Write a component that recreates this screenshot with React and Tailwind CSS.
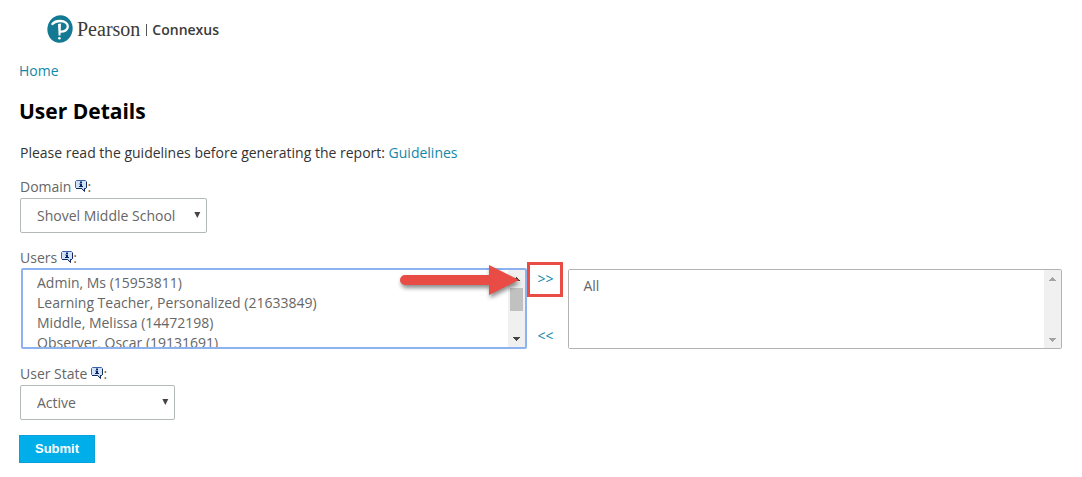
import React from "react";

function PearsonMark() {
  return (
    <svg width="26" height="28" viewBox="0 0 26 28" aria-hidden="true">
      <ellipse cx="13" cy="14" rx="12.6" ry="13.9" transform="rotate(12 13 14)" fill="#147a94" />
      <path
        d="M5.4 9C7.2 6.8 10 5.9 13.2 6C17.8 6.1 20.9 8.2 20.8 11.6C20.7 15 17.4 16.9 13.4 16.7"
        fill="none"
        stroke="#fff"
        strokeWidth="2.3"
        strokeLinecap="round"
      />
      <path d="M11 9L14 8.6L13.5 20.4L11.6 20.6Z" fill="#fff" />
      <circle cx="12.4" cy="23.2" r="1.3" fill="#fff" />
    </svg>
  );
}

function InfoIcon() {
  return (
    <svg className="mx-1 mb-1 inline-block" width="12" height="12" viewBox="0 0 12 12" aria-hidden="true">
      <path
        d="M1.5 .5H10.5L11.5 1.5V7.5L10.5 8.5H9.5V11.3L6.5 8.5H1.5L.5 7.5V1.5Z"
        fill="#cfe3fa"
        stroke="#3c63ac"
      />
      <path d="M11.5 2V7.5L10.5 8.5H9.5V11.3L6.5 8.5H1" fill="none" stroke="#14285c" />
      <path d="M5 1.6H7V3H5ZM4.4 3.6H7V6H8V7H4V6H5V4.6H4.4Z" fill="#0b2565" />
    </svg>
  );
}

function FieldLabel({ htmlFor, children }) {
  return (
    <label htmlFor={htmlFor} className="block h-5 whitespace-nowrap leading-5 text-[#666]">
      {children}
      <InfoIcon />
      <span className="-ml-1">:</span>
    </label>
  );
}

function Dropdown({ id, width, options }) {
  return (
    <div className={"relative mt-px " + width}>
      <select
        id={id}
        className="h-[35px] w-full appearance-none rounded-xs border border-[#b3b8b8] bg-white pl-4 pr-6 text-[#666] outline-none"
      >
        {options.map((o) => (
          <option key={o}>{o}</option>
        ))}
      </select>
      <svg className="pointer-events-none absolute right-1.5 top-3.5" width="7" height="6" viewBox="0 0 7 6" aria-hidden="true">
        <path d="M.3 0H6.3L3.3 6Z" fill="#444" />
      </svg>
    </div>
  );
}

function ScrollRail({ color, thumb }) {
  return (
    <div className="flex w-[17px] shrink-0 flex-col items-center bg-[#f0f0f0] pb-1.5 pt-[7px]" aria-hidden="true">
      <svg width="7" height="4" viewBox="0 0 7 4" shapeRendering="crispEdges">
        <path d="M3 0H4V1H5V2H6V3H7V4H0V3H1V2H2V1H3Z" fill={color} />
      </svg>
      {thumb && <div className="mt-[7px] h-[23px] w-[13px] bg-[#c1c1c1]" />}
      <svg className="mt-auto" width="7" height="4" viewBox="0 0 7 4" shapeRendering="crispEdges">
        <path d="M0 0H7V1H6V2H5V3H4V4H3V3H2V2H1V1H0Z" fill={color} />
      </svg>
    </div>
  );
}

function Arrow() {
  return (
    <svg
      className="pointer-events-none absolute -top-[5px] right-1.5 drop-shadow-[1px_3px_2px_rgba(0,0,0,0.45)]"
      width="119"
      height="30"
      viewBox="0 0 119 30"
      aria-hidden="true"
    >
      <path d="M5 10H89V0L119 15L89 30V20H5A5 5 0 0 1 5 10Z" fill="#e94b45" />
    </svg>
  );
}

const users = [
  "Admin, Ms (15953811)",
  "Learning Teacher, Personalized (21633849)",
  "Middle, Melissa (14472198)",
  "Observer, Oscar (19131691)",
];

const list =
  "block h-full min-w-0 flex-1 appearance-none overflow-hidden bg-white text-[#666] outline-none [scrollbar-width:none]";
const item = "h-5 min-h-5 p-0 leading-5";

export default function App() {
  return (
    <div className="px-5 pb-3.5 font-['Open_Sans',sans-serif] text-sm leading-5 text-[#333]">
      <header className="flex items-center pl-[27px] pt-[15px]">
        <PearsonMark />
        <span className="ml-1 font-['Liberation_Serif',serif] text-xl leading-7 text-[#3a3a38]">Pearson</span>
        <span className="ml-1.5 mt-0.5 h-3 w-px bg-[#555]" />
        <span className="ml-[5px] mt-0.5 font-semibold text-[#3a3a38]">Connexus</span>
      </header>

      <nav className="-ml-px mt-[18px]">
        <a href="#home" className="text-[#1288a8]">Home</a>
      </nav>

      <main>
        <h1 className="-ml-px mt-4 text-[21px] font-bold leading-7 text-black">User Details</h1>
        <p className="mt-[18px]">
          Please read the guidelines before generating the report:{" "}
          <a href="#guidelines" className="text-[#1288a8]">Guidelines</a>
        </p>

        <form onSubmit={(e) => e.preventDefault()}>
          <div className="mt-3.5">
            <FieldLabel htmlFor="domain">Domain</FieldLabel>
            <Dropdown id="domain" width="w-[187px]" options={["Shovel Middle School"]} />
          </div>

          <div className="mt-[15px]">
            <FieldLabel htmlFor="users">Users</FieldLabel>
            <div className="flex pl-px">
              <div className="relative flex h-[81px] min-w-0 flex-[505] rounded-xs border-2 border-[#8db2f0] bg-white">
                <select id="users" multiple size={4} className={list + " pl-3.5 pt-[3px]"}>
                  {users.map((u) => (
                    <option key={u} className={item}>{u}</option>
                  ))}
                </select>
                <ScrollRail color="#444" thumb />
                <Arrow />
              </div>
              <div className="-mt-1.5 flex w-[41px] shrink-0 flex-col items-start">
                <button type="button" className="h-[35px] w-9 border-[3px] border-[#e94b45] pb-0.5 text-[#1288a8]">
                  &gt;&gt;
                </button>
                <button type="button" className="mt-[29px] w-9 text-[#1288a8]">&lt;&lt;</button>
              </div>
              <div className="mt-px flex h-20 min-w-0 flex-[494] rounded-xs border border-[#b3b3b3] bg-white">
                <select aria-label="Selected users" multiple size={4} className={list + " pl-3.5 pt-1.5"}>
                  <option className={item}>All</option>
                </select>
                <ScrollRail color="#a3a3a3" />
              </div>
            </div>
          </div>

          <div className="mt-[15px]">
            <FieldLabel htmlFor="state">User State</FieldLabel>
            <Dropdown id="state" width="w-[155px]" options={["Active"]} />
          </div>

          <button
            type="submit"
            className="-ml-px mt-[15px] block h-7 w-[76px] border border-[#0aa0dc] bg-[#00aeea] font-['Liberation_Sans',sans-serif] text-[13px] font-bold text-white"
          >
            Submit
          </button>
        </form>
      </main>
    </div>
  );
}
